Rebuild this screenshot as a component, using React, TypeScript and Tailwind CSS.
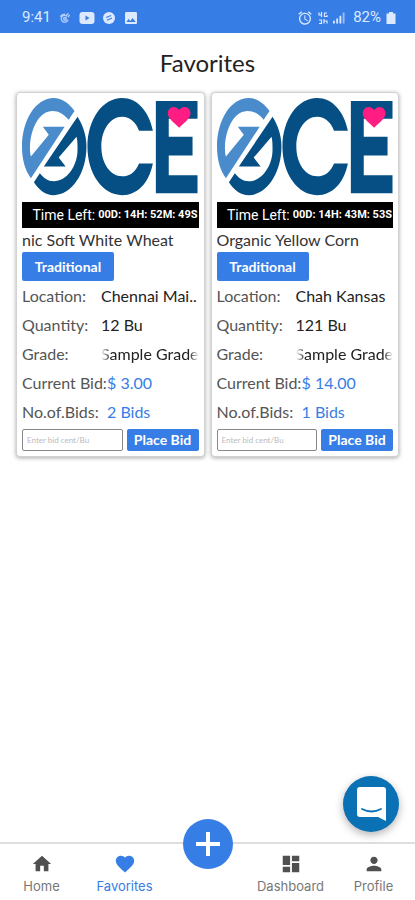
import React from "react";
import {
  MdAccessAlarm,
  MdDashboard,
  MdFavorite,
  MdHome,
  MdImage,
  MdPerson,
} from "react-icons/md";

type Lot = {
  id: string;
  name: string;
  timeLeft: string;
  location: string;
  quantity: string;
  grade: string;
  currentBid: string;
  bids: string;
};

const lots: Lot[] = [
  {
    id: "wheat",
    name: "nic Soft White Wheat",
    timeLeft: "00D: 14H: 52M: 49S",
    location: "Chennai Mai..",
    quantity: "12 Bu",
    grade: "Sample Grade",
    currentBid: "$ 3.00",
    bids: "2 Bids",
  },
  {
    id: "corn",
    name: "Organic Yellow Corn",
    timeLeft: "00D: 14H: 43M: 53S",
    location: "Chah Kansas",
    quantity: "121 Bu",
    grade: "Sample Grade",
    currentBid: "$ 14.00",
    bids: "1 Bids",
  },
];

const StatusBar: React.FC = () => (
  <div className="h-[33px] pt-[2px] bg-[#377de6] pl-[22px] pr-[18px] flex items-center justify-between text-[#dce9ff] font-['Roboto',sans-serif] text-[15px]">
    <div className="flex items-center gap-2">
      <span>9:41</span>
      <svg viewBox="0 0 14 14" className="w-3 h-3" fill="none" stroke="currentColor" strokeWidth="1.6" opacity="0.75">
        <path d="M11 1.5 8.5 4M9.5 5a4 4 0 1 0 1 4M1.5 5.5C3 3 5 2.5 7 2.5M12.5 3.5 10.5 6" />
        <circle cx="7" cy="8" r="1.6" />
      </svg>
      <svg viewBox="0 0 15 12" className="w-4 h-3">
        <rect width="15" height="12" rx="3" fill="currentColor" />
        <path d="M6 3.5v5L10 6z" fill="#377de6" />
      </svg>
      <svg viewBox="0 0 14 14" className="w-3 h-3">
        <circle cx="7" cy="7" r="7" fill="currentColor" />
        <path d="M3.5 6.5 9.5 4M4.5 9.5 10.5 7" stroke="#377de6" strokeWidth="1.3" />
      </svg>
      <MdImage className="w-4 h-4" />
    </div>
    <div className="flex items-center gap-1">
      <MdAccessAlarm className="w-4 h-4" />
      <svg viewBox="0 0 10 12" className="w-3 h-3" fill="none" stroke="currentColor" strokeWidth="1.2">
        <path d="M1 .5v2.5h3M3.5 0v5M9 1H6.5v3.5H9V3M1 8h2.5v3.5H1M6 7v4.5M6 9h3V11.5" />
      </svg>
      <svg viewBox="0 0 13 12" className="w-3 h-3" fill="currentColor">
        <path d="M0 9h2v3H0zM3.5 6.5h2V12h-2zM7 3.5h2V12H7z" />
        <path d="M10.5 0h2v12h-2z" opacity="0.6" />
      </svg>
      <span className="ml-1">82%</span>
      <svg viewBox="0 0 9 12" className="w-3 h-3" fill="currentColor">
        <path d="M2.5 0h4v1.5H9V12H0V1.5h2.5z" />
      </svg>
    </div>
  </div>
);

const OceLogo: React.FC = () => (
  <svg viewBox="0 0 178 99" className="w-full block" role="img" aria-label="OCE">
    <path
      fill="#4a8ccb"
      d="M53 13C47 5 40 0 32 0 14 0 0 22 0 49c0 13 3 24 9 32L43 29H21l6 8L9 59C8 56 8 52 8 49 9 29 18 13 31 13c6 0 11 3 16 9z"
    />
    <path
      fill="#054f84"
      d="M56 19c5 8 9 18 9 30 0 27-15 49-33 49-8 0-15-5-20-13l6-9c4 5 8 8 14 8 13 0 24-15 24-32 0-5 0-9-1-13L37 60l7 9H22z"
    />
    <path
      fill="#054f84"
      d="M132 33C128 13 116 0 101 0 81 0 66 22 66 49s15 49 35 49c15 0 27-12 31-32h-14c-3 8-9 13-17 13-12 0-21-13-21-30s9-30 21-30c8 0 14 6 17 14z"
    />
    <path fill="#054f84" d="M135 3h42v18h-29v18h24v19h-24v20h29v18h-42z" />
    <path
      fill="#ff1c83"
      d="M158.5 30C152 24 147 20 147 15.5 147 12 149.5 9 153 9c2.5 0 4.5 1.5 5.5 3 1-1.5 3-3 5.5-3 3.5 0 6 3 6 6.5 0 4.5-5 8.5-11.5 14.5z"
    />
  </svg>
);

const LotCard: React.FC<{ lot: Lot }> = ({ lot }) => (
  <article className="min-w-0 rounded border border-[#d2d2d2] bg-white p-[5px] shadow-[0_1px_4px_rgba(0,0,0,0.35)] text-base text-[#555]">
    <OceLogo />
    <div className="mt-[6px] h-[26px] bg-black text-white pr-px flex items-center justify-end gap-[3px] whitespace-nowrap font-['Roboto',sans-serif] text-sm">
      Time Left: <span className="text-[11px] font-bold">{lot.timeLeft}</span>
    </div>
    <h2 className="h-6 leading-6 overflow-hidden whitespace-nowrap text-[#333]">
      {lot.name}
    </h2>
    <button className="h-[29px] w-[92px] rounded-xs bg-[#377de6] text-white text-sm font-bold">
      Traditional
    </button>
    <dl className="leading-[29px] whitespace-nowrap">
      <div className="flex">
        <dt className="w-[79px] shrink-0">Location:</dt>
        <dd className="text-[#222]">{lot.location}</dd>
      </div>
      <div className="flex">
        <dt className="w-[79px] shrink-0">Quantity:</dt>
        <dd className="text-[#222]">{lot.quantity}</dd>
      </div>
      <div className="flex">
        <dt className="w-[79px] shrink-0">Grade:</dt>
        <dd className="flex-1 min-w-0 flex justify-center overflow-hidden text-[#222] [mask-image:linear-gradient(to_right,transparent,black_10%,black_90%,transparent)]">
          {lot.grade}
        </dd>
      </div>
      <div className="flex">
        <dt className="w-[85px] shrink-0">Current Bid:</dt>
        <dd className="text-[#377de6]">{lot.currentBid}</dd>
      </div>
      <div className="flex">
        <dt className="w-[85px] shrink-0">No.of.Bids:</dt>
        <dd className="text-[#377de6]">{lot.bids}</dd>
      </div>
    </dl>
    <form className="mt-[3px] flex gap-1" onSubmit={(e) => e.preventDefault()}>
      <input
        type="text"
        aria-label="Bid in cents per bushel"
        placeholder="Enter bid cent/Bu"
        className="h-[22px] flex-1 min-w-0 rounded-xs border border-[#888] px-1 text-[8px] placeholder:text-[#bbb]"
      />
      <button className="h-[22px] w-[72px] rounded-xs bg-[#377de6] text-white text-sm font-bold">
        Place Bid
      </button>
    </form>
  </article>
);

const tab = "flex flex-col items-center text-[13px] leading-4";

const BottomNav: React.FC = () => (
  <nav className="sticky bottom-0 h-[58px] border-t-2 border-[#dedede] bg-white grid grid-cols-5 pt-[9px] text-[#777] font-['Inter',sans-serif]">
    <a href="#home" className={tab}>
      <MdHome className="w-[22px] h-[22px] mb-[3px] text-[#505050]" />
      Home
    </a>
    <a href="#favorites" aria-current="page" className={`${tab} text-[#377de6]`}>
      <MdFavorite className="w-[22px] h-[22px] mb-[3px]" />
      Favorites
    </a>
    <div className="relative">
      <button
        aria-label="Add"
        className="absolute -top-[34px] left-1/2 -translate-x-1/2 w-[50px] h-[50px] rounded-full bg-[#377de6] flex items-center justify-center"
      >
        <svg viewBox="0 0 24 24" className="w-6 h-6" stroke="white" strokeWidth="4">
          <path d="M12 0v24M0 12h24" />
        </svg>
      </button>
    </div>
    <a href="#dashboard" className={tab}>
      <MdDashboard className="w-[22px] h-[22px] mb-[3px] text-[#505050]" />
      Dashboard
    </a>
    <a href="#profile" className={tab}>
      <MdPerson className="w-[22px] h-[22px] mb-[3px] text-[#505050]" />
      Profile
    </a>
    {/* Chat launcher */}
    <button
      aria-label="Open chat"
      className="absolute right-4 bottom-[68px] w-14 h-14 rounded-full bg-[#0a71b5] shadow-[0_3px_8px_rgba(0,0,0,0.3)] flex items-center justify-center"
    >
      <svg viewBox="0 0 29 34" className="w-[29px] h-[34px]">
        <path d="M3 0h23q3 0 3 3v31l-8-4H3q-3 0-3-3V3q0-3 3-3z" fill="white" />
        <path d="M5 22q9.5 5 19 0" fill="none" stroke="#0a71b5" strokeWidth="1.8" strokeLinecap="round" />
      </svg>
    </button>
  </nav>
);

const App: React.FC = () => {
  return (
    <div className="min-h-screen flex flex-col bg-white font-['Lato',sans-serif]">
      <StatusBar />
      <main className="flex-1 px-4">
        <h1 className="pt-[14px] pb-[13px] text-2xl leading-8 text-center text-[#222]">
          Favorites
        </h1>
        <div className="grid grid-cols-2 gap-[6px]">
          {lots.map((lot) => (
            <LotCard key={lot.id} lot={lot} />
          ))}
        </div>
      </main>
      <BottomNav />
    </div>
  );
};

export default App;
